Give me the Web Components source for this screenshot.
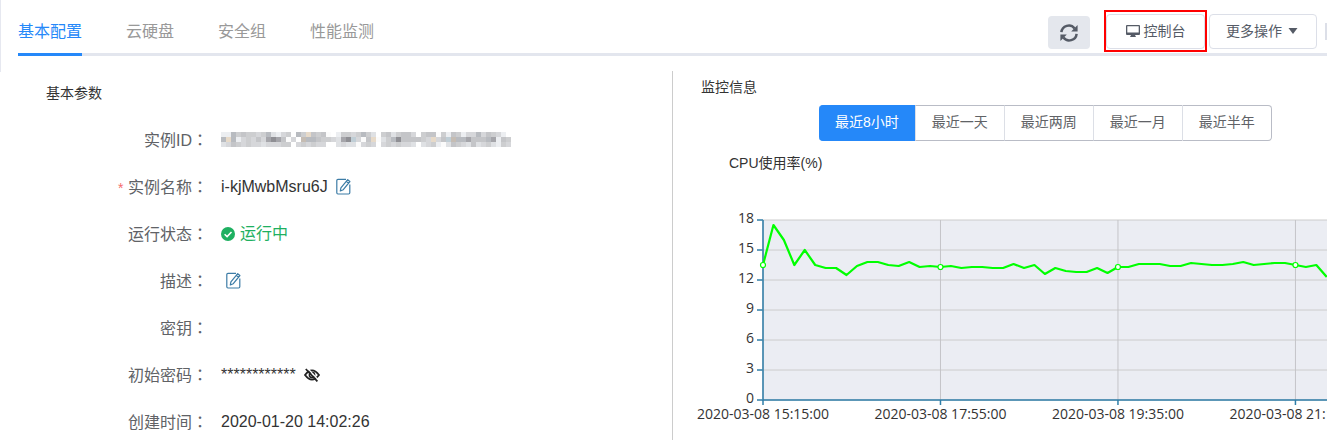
<!DOCTYPE html>
<html lang="zh-CN">
<head>
<meta charset="utf-8">
<title>实例详情</title>
<style>
    html { scrollbar-width: none; }
    body {
        margin: 0;
        background: #fff;
        color: #333;
        font: 14px/20px "Liberation Sans", "Noto Sans CJK SC", sans-serif;
        --blue: #2588f9;
        --line: #e3e6ee;
    }
</style>
</head>
<body>
<instance-page></instance-page>

<script>
// Small icon set shared by all elements
const ICONS = {
    refresh: `<svg viewBox="0 0 20 20" width="20" height="20" fill="none" stroke="#555b66" stroke-width="2.5">
        <path d="M2.4 9.2A7.4 7.4 0 0 1 15.6 5.4M17.6 10.8A7.4 7.4 0 0 1 4.4 14.6"/>
        <path d="M18.6 2v6.4h-6.4zM1.4 18v-6.4h6.4z" fill="#555b66" stroke="none"/></svg>`,
    monitor: `<svg viewBox="0 0 14 14" width="14" height="14">
        <path fill="#555b66" fill-rule="evenodd" d="M1 1h12q1 0 1 1v8q0 1-1 1H9l1 2H4l1-2H1q-1 0-1-1V2q0-1 1-1zM1.3 2.2v6.3h11.4V2.2z"/></svg>`,
    caret: `<svg viewBox="0 0 10 6" width="10" height="6"><path fill="#555b66" d="M.5 0h9L5 6z"/></svg>`,
    edit: `<svg viewBox="0 0 15 17" width="15" height="17" fill="none" stroke="#3c7ca6" stroke-width="1.2" stroke-linejoin="round">
        <path d="M10 1.3H2q-1.2 0-1.2 1.2v12.3q0 1.2 1.2 1.2h10.6q1.2 0 1.2-1.2V6.5"/>
        <path d="M11.7 1.7l2.2 1.8-6.6 8.2-3 1.3.6-3.2zM10.3 3.4l2.2 1.8"/></svg>`,
    check: `<svg viewBox="0 0 14 14" width="14" height="14"><circle cx="7" cy="7" r="7" fill="#1eb061"/>
        <path d="M3.6 7.2l2.5 2.4 4.4-4.6" fill="none" stroke="#fff" stroke-width="1.5"/></svg>`,
    hidden: `<svg viewBox="0 0 16 14" width="16" height="14" fill="none" stroke="#222">
        <path d="M1 7Q8-2.2 15 7 8 16.2 1 7z" stroke-width="1.8"/>
        <circle cx="8" cy="7" r="2.6" stroke-width="1.6"/>
        <path d="M3.4 0l11 12" stroke="#fff" stroke-width="1.2"/>
        <path d="M1.8 1l11.6 12.4" stroke-width="1.8"/></svg>`
};

class TabBar extends HTMLElement {
    connectedCallback() {
        this.attachShadow({ mode: 'open' });
        this.shadowRoot.innerHTML = `
            <style>
                :host { display: block; border-left: 1px solid #e6e8f0; padding: 0 0 16px 17px; }
                .bar {
                    display: flex;
                    align-items: flex-end;
                    justify-content: space-between;
                    height: 53px;
                    border-bottom: 3px solid var(--line);
                }
                nav { display: flex; gap: 44px; }
                a {
                    font-size: 16px;
                    line-height: 20px;
                    padding-bottom: 11px;
                    margin-bottom: -3px;
                    border-bottom: 3px solid transparent;
                    color: #999;
                    text-decoration: none;
                }
                a.active { color: var(--blue); border-color: var(--blue); }
            </style>
            <div class="bar">
                <nav>
                    <a href="#config" class="active">基本配置</a>
                    <a href="#disk">云硬盘</a>
                    <a href="#group">安全组</a>
                    <a href="#monitor">性能监测</a>
                </nav>
                <slot></slot>
            </div>
        `;
    }
}

class ActionBar extends HTMLElement {
    connectedCallback() {
        this.attachShadow({ mode: 'open' });
        this.shadowRoot.innerHTML = `
            <style>
                :host { display: flex; align-items: flex-end; padding-bottom: 1px; }
                button {
                    display: flex;
                    align-items: center;
                    justify-content: center;
                    box-sizing: border-box;
                    height: 35px;
                    padding: 0 0 2px;
                    border: 1px solid #dcdfe8;
                    border-radius: 4px;
                    background: #fff;
                    color: #555b66;
                    font: inherit;
                    cursor: pointer;
                }
                .refresh {
                    width: 42px;
                    height: 33px;
                    margin: 0 14px 3px 0;
                    padding: 0;
                    border: 0;
                    background: #e4e7ed;
                }
                .highlight { border: 2px solid #f00; padding: 2px 0 1px; margin-right: 2px; }
                .console { width: 99px; gap: 4px; }
                .more { margin: 0 8px 3px 0; padding: 0 18px 2px 16px; gap: 6px; }
                .edge { width: 2px; height: 17px; margin-bottom: 12px; background: #dcdfe8; }
            </style>
            <button class="refresh" aria-label="刷新">${ICONS.refresh}</button>
            <div class="highlight"><button class="console">${ICONS.monitor}控制台</button></div>
            <button class="more">更多操作${ICONS.caret}</button>
            <span class="edge"></span>
        `;
    }
}

class InfoRow extends HTMLElement {
    connectedCallback() {
        const required = this.hasAttribute('required') ? '<i>*</i> ' : '';
        this.attachShadow({ mode: 'open' });
        this.shadowRoot.innerHTML = `
            <style>
                :host { display: flex; align-items: center; gap: 13px; height: 47px; font-size: 16px; line-height: 24px; }
                .label { flex: 0 0 208px; text-align: right; color: #606266; }
                .colon { font-family: "Noto Sans CJK JP", sans-serif; }
                i { color: #f56c6c; font-size: 14px; font-style: normal; }
                .value { display: flex; align-items: center; }
            </style>
            <span class="label">${required}${this.getAttribute('label')}<span class="colon" lang="ja">：</span></span>
            <span class="value"><slot></slot></span>
        `;
    }
}

class IconButton extends HTMLElement {
    connectedCallback() {
        this.attachShadow({ mode: 'open' });
        this.shadowRoot.innerHTML = `
            <style>
                :host { display: block; }
                button { display: flex; padding: 0; border: 0; background: none; cursor: pointer; }
            </style>
            <button aria-label="${this.getAttribute('label')}">${ICONS[this.getAttribute('icon')]}</button>
        `;
    }
}

// Pixelated strip shown instead of a masked value
class MaskedValue extends HTMLElement {
    connectedCallback() {
        const colors = {
            a: '#8f8f94', b: '#a5a5aa', c: '#b8bbc0', d: '#c4c5c8', e: '#cdced0', f: '#d6d7da',
            g: '#dfe1e4', h: '#eceef1', s: '#e7dac9', t: '#c5bcb3', u: '#c0ced6', w: '#fbfbfb', '.': '#fff'
        };
        const rows = [
            'hhcedeefecghfe.cesdedw.heefeceg.edgeddf.eddwehdehffcfdefh..',
            'cschfefdfbabdwf.tccdeefgbaufwdswgecaddddefsfdutccbdddcbhdetuefcedg',
            'gfdefeffgfffee.fefeff..gfggwfef.fefeffg.gfehwgdefgdgfeghefg'
        ];
        const cells = rows.map((row, y) => [...row].slice(0, 58).map((c, x) =>
            `<rect x="${x * 5}" y="${y * 5}" width="5" height="5" fill="${colors[c]}"/>`).join('')).join('');
        this.attachShadow({ mode: 'open' });
        this.shadowRoot.innerHTML = `
            <style>:host, svg { display: block; }</style>
            <svg width="291" height="15" shape-rendering="crispEdges">${cells}</svg>
        `;
    }
}

class RangePicker extends HTMLElement {
    connectedCallback() {
        this.attachShadow({ mode: 'open' });
        this.shadowRoot.innerHTML = `
            <style>
                :host { display: flex; }
                button {
                    box-sizing: border-box;
                    height: 36px;
                    padding: 0 16px 2px;
                    border: 1px solid #b9bcc6;
                    border-left-color: #dcdfe6;
                    border-right-width: 0;
                    background: #fff;
                    color: #606266;
                    font: inherit;
                    white-space: nowrap;
                    cursor: pointer;
                }
                button:first-of-type { border-left-width: 0; border-radius: 4px 0 0 4px; }
                button:last-of-type { border-right-width: 1px; border-radius: 0 4px 4px 0; }
                button.active { background: var(--blue); border-color: var(--blue); color: #fff; }
            </style>
            <button class="active">最近8小时</button><button>最近一天</button><button>最近两周</button><button>最近一月</button><button>最近半年</button>
        `;
        const buttons = this.shadowRoot.querySelectorAll('button');
        buttons.forEach(btn => {
            btn.addEventListener('click', () => {
                buttons.forEach(b => b.classList.toggle('active', b === btn));
            });
        });
    }
}

class CpuChart extends HTMLElement {
    connectedCallback() {
        const left = 90, top = 47, height = 180, max = 18;
        const perTick = 17, step = 10.44;
        const data = [
            13.5, 17.5, 16, 13.5, 15, 13.5, 13.2, 13.2, 12.5, 13.4, 13.8, 13.8, 13.5, 13.4, 13.8, 13.3, 13.4,
            13.3, 13.4, 13.2, 13.3, 13.3, 13.2, 13.2, 13.6, 13.2, 13.5, 12.6, 13.2, 12.9, 12.8, 12.8, 13.2, 12.7,
            13.3, 13.3, 13.6, 13.6, 13.6, 13.4, 13.4, 13.7, 13.6, 13.5, 13.5, 13.6, 13.8, 13.5, 13.6, 13.7, 13.7,
            13.5, 13.3, 13.5, 12.3
        ];
        const times = ['15:15:00', '17:55:00', '19:35:00', '21:15:00'];
        const px = i => left + i * step;
        const py = v => top + height - v / max * height;

        let grid = '', labels = '', dots = '';
        for (let v = 0; v <= max; v += 3) {
            grid += `<path d="M${left} ${py(v)}H2000" stroke="#ccc"/>
                <path d="M${left - 6} ${py(v)}h6" stroke="#2f7ea8" stroke-width="1.5"/>`;
            labels += `<text x="${left - 9}" y="${py(v) + 3}" text-anchor="end">${v}</text>`;
        }
        times.forEach((time, i) => {
            const x = px(i * perTick);
            grid += `<path d="M${x} ${top}v${height}" stroke="#c4c4c8"/>
                <path d="M${x} ${top + height}v5" stroke="#2f7ea8" stroke-width="1.5"/>`;
            labels += `<text x="${x}" y="${top + height + 19}" text-anchor="middle">2020-03-08 ${time}</text>`;
            dots += `<circle cx="${x}" cy="${py(data[i * perTick])}" r="2.5"/>`;
        });

        this.attachShadow({ mode: 'open' });
        this.shadowRoot.innerHTML = `
            <style>
                :host, svg { display: block; }
                text { font: 14px "Open Sans", "Noto Sans", sans-serif; fill: #333; }
            </style>
            <svg width="100%" height="267" role="img" aria-label="CPU使用率">
                <rect x="${left}" y="${top}" width="2000" height="${height}" fill="#ebedf3"/>
                ${grid}
                <path d="M${left} ${top}v${height}H2000" fill="none" stroke="#2f7ea8" stroke-width="1.5"/>
                ${labels}
                <polyline points="${data.map((v, i) => px(i) + ',' + py(v)).join(' ')}" fill="none" stroke="#0f0" stroke-width="2.2" stroke-linejoin="round"/>
                <g fill="#fff" stroke="#0f0" stroke-width="1.2">${dots}</g>
            </svg>
        `;
    }
}

class InstancePage extends HTMLElement {
    connectedCallback() {
        this.attachShadow({ mode: 'open' });
        this.shadowRoot.innerHTML = `
            <style>
                :host { display: block; }
                .columns { display: grid; grid-template-columns: minmax(0, 672fr) minmax(0, 655fr); margin-top: -1px; }
                h2, h3 { margin: 0; font-size: 14px; line-height: 20px; font-weight: normal; }
                .params { padding-top: 12px; }
                .params h2 { margin: 0 0 13px 46px; }
                .monitor { border-left: 1px solid #ccc; padding-top: 6px; overflow: hidden; }
                .monitor h2 { margin: 0 0 8px 28px; }
                .monitor h3 { margin: 12px 0 0 56px; }
                range-picker { margin-left: 146px; }
                .status { display: flex; align-items: center; gap: 5px; color: #1eb061; }
                .name-edit, .eye { margin-left: 8px; }
                .desc-edit { margin-left: 5px; }
            </style>
            <tab-bar><action-bar></action-bar></tab-bar>
            <div class="columns">
                <section class="params">
                    <h2>基本参数</h2>
                    <info-row label="实例ID"><masked-value></masked-value></info-row>
                    <info-row label="实例名称" required>i-kjMwbMsru6J<icon-button class="name-edit" icon="edit" label="编辑名称"></icon-button></info-row>
                    <info-row label="运行状态"><span class="status">${ICONS.check}运行中</span></info-row>
                    <info-row label="描述"><icon-button class="desc-edit" icon="edit" label="编辑描述"></icon-button></info-row>
                    <info-row label="密钥"></info-row>
                    <info-row label="初始密码">************<icon-button class="eye" icon="hidden" label="显示密码"></icon-button></info-row>
                    <info-row label="创建时间">2020-01-20 14:02:26</info-row>
                </section>
                <section class="monitor">
                    <h2>监控信息</h2>
                    <range-picker></range-picker>
                    <h3>CPU使用率(%)</h3>
                    <cpu-chart></cpu-chart>
                </section>
            </div>
        `;
    }
}

customElements.define('tab-bar', TabBar);
customElements.define('action-bar', ActionBar);
customElements.define('info-row', InfoRow);
customElements.define('icon-button', IconButton);
customElements.define('masked-value', MaskedValue);
customElements.define('range-picker', RangePicker);
customElements.define('cpu-chart', CpuChart);
customElements.define('instance-page', InstancePage);
</script>
</body>
</html>
